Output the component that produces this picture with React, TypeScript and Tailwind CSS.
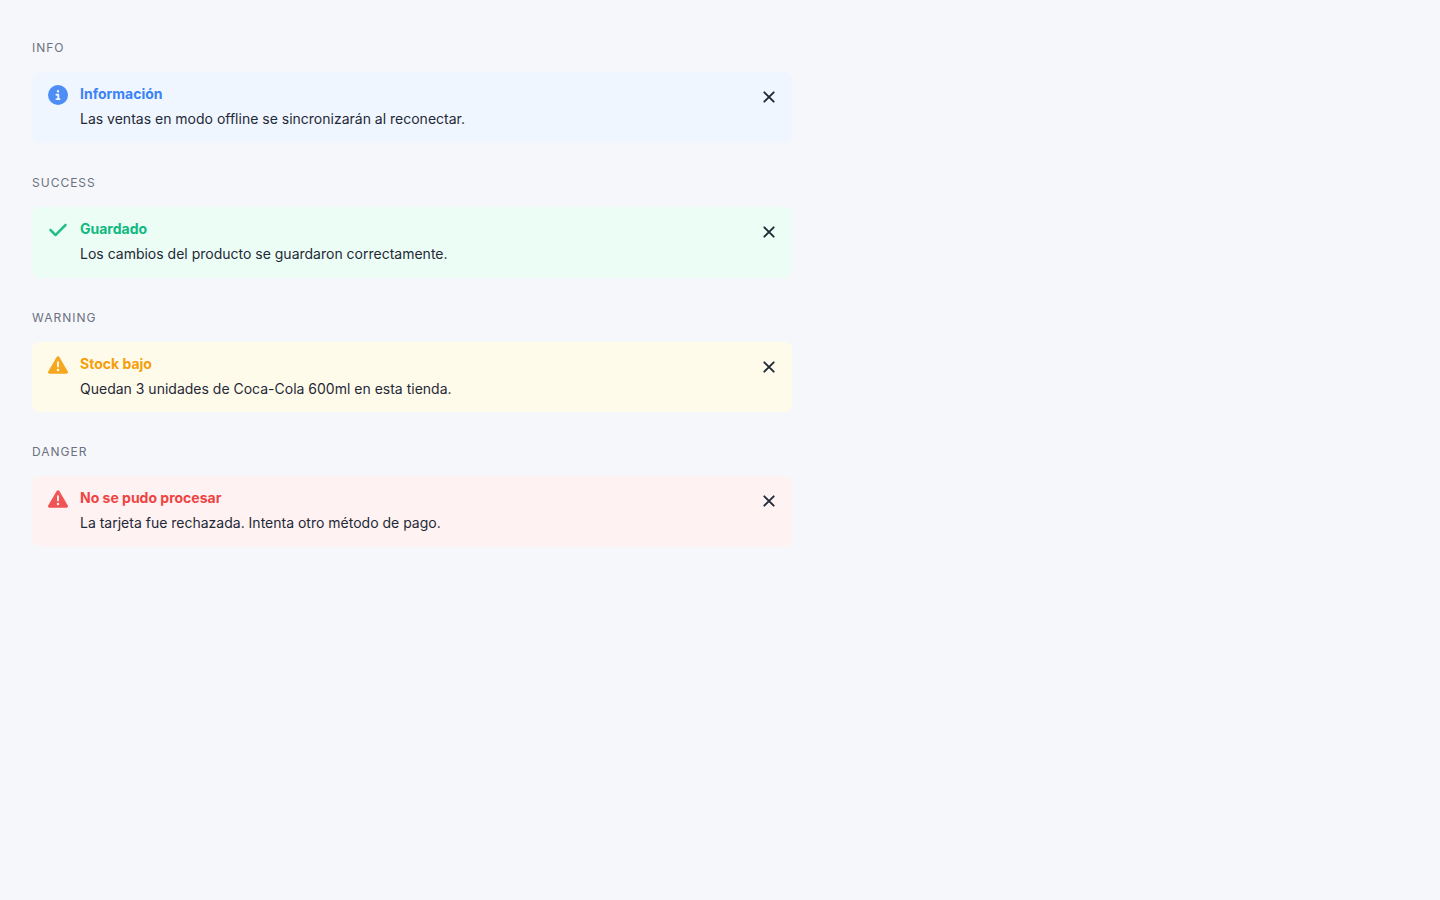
import React from "react";
import { FaCheck, FaCircleInfo, FaTriangleExclamation } from "react-icons/fa6";
import type { IconType } from "react-icons";

type Alert = {
  kind: string;
  title: string;
  message: string;
  Icon: IconType;
  box: string;
  tone: string;
};

const alerts: Alert[] = [
  {
    kind: "Info",
    title: "Información",
    message: "Las ventas en modo offline se sincronizarán al reconectar.",
    Icon: FaCircleInfo,
    box: "bg-[#eff6ff]",
    tone: "text-[#3b82f6]",
  },
  {
    kind: "Success",
    title: "Guardado",
    message: "Los cambios del producto se guardaron correctamente.",
    Icon: FaCheck,
    box: "bg-[#ecfdf5]",
    tone: "text-[#10b981]",
  },
  {
    kind: "Warning",
    title: "Stock bajo",
    message: "Quedan 3 unidades de Coca-Cola 600ml en esta tienda.",
    Icon: FaTriangleExclamation,
    box: "bg-[#fffbeb]",
    tone: "text-[#f59e0b]",
  },
  {
    kind: "Danger",
    title: "No se pudo procesar",
    message: "La tarjeta fue rechazada. Intenta otro método de pago.",
    Icon: FaTriangleExclamation,
    box: "bg-[#fef2f2]",
    tone: "text-[#ef4444]",
  },
];

function CloseIcon() {
  return (
    <svg viewBox="0 0 14 14" className="size-3.5" fill="none" stroke="currentColor" aria-hidden="true">
      <path d="M2.3 2.3l9.4 9.4M11.7 2.3l-9.4 9.4" strokeWidth="1.9" strokeLinecap="round" />
    </svg>
  );
}

export default function App() {
  return (
    <main className="min-h-screen bg-[#f6f7fb] px-8 py-10 font-['Inter',sans-serif] text-[#1f2937] antialiased">
      <div className="flex max-w-[760px] flex-col gap-8">
        {alerts.map(({ kind, title, message, Icon, box, tone }) => (
          <section key={kind}>
            <h2 className="mb-4 text-xs tracking-[1px] text-[#6b7280] uppercase">{kind}</h2>
            <div role="alert" className={`flex items-start gap-3 rounded-lg px-4 py-3 ${box}`}>
              <Icon className={`mt-px size-5 shrink-0 opacity-90 ${tone}`} aria-hidden="true" />
              <div className="min-w-0 flex-1 text-sm">
                <p className={`font-bold ${tone}`}>{title}</p>
                <p className="mt-1 leading-relaxed">{message}</p>
              </div>
              <button type="button" aria-label="Cerrar" className="mt-1.5 shrink-0">
                <CloseIcon />
              </button>
            </div>
          </section>
        ))}
      </div>
    </main>
  );
}
